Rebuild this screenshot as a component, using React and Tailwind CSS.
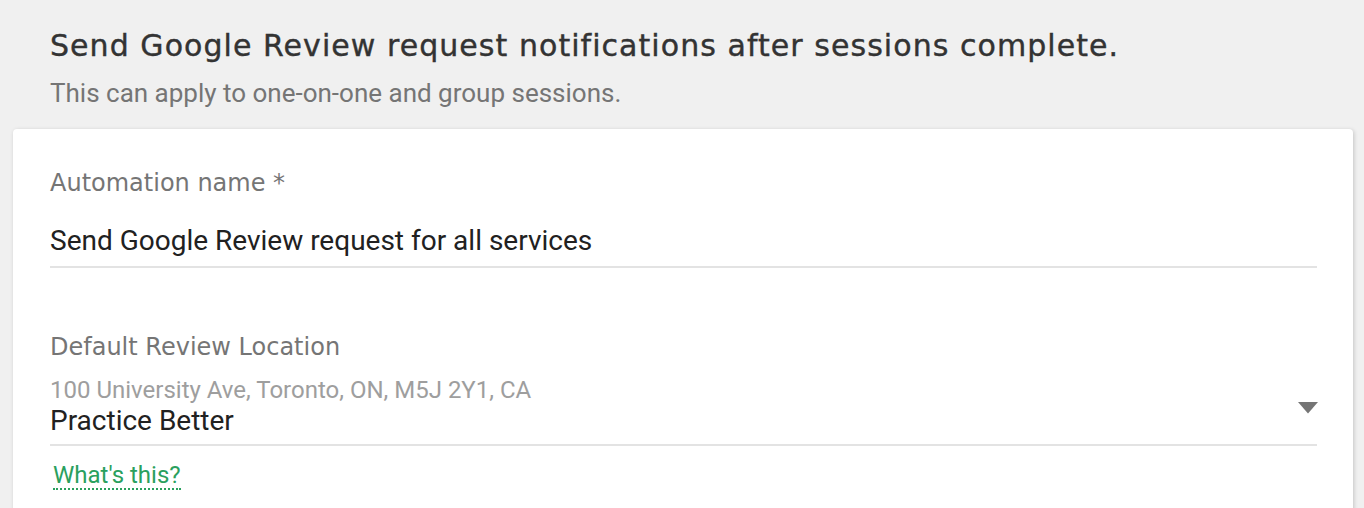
import React from "react";

export default function App() {
  return (
    <div className="w-[1364px] h-[508px] overflow-hidden bg-[#f0f0f0] font-['Roboto',sans-serif]">
      <div className="pl-[50px] pt-[26px]">
        <h1 className="font-['DejaVu_Sans',sans-serif] text-[30px] leading-[40px] tracking-[1.05px] text-[#333333] font-normal whitespace-nowrap [-webkit-text-stroke:0.4px_#333333]">
          Send Google Review request notifications after sessions complete.
        </h1>
        <p className="mt-[12px] text-[26px] leading-[30px] text-[#757575]">
          This can apply to one-on-one and group sessions.
        </p>
      </div>
      <div className="mt-[21px] ml-[13px] w-[1340px] h-[400px] bg-white rounded-[4px] shadow-[1px_1px_4px_rgba(0,0,0,0.18)] pl-[37px] pr-[36px] pt-[39px]">
        <div className="font-['DejaVu_Sans',sans-serif] text-[24px] leading-[30px] text-[#757575]">
          Automation name *
        </div>
        <div className="mt-[26px] h-[44px] border-b-2 border-[#e3e3e3] text-[28px] leading-[34px] text-[#212121]">
          Send Google Review request for all services
        </div>
        <div className="mt-[64px] font-['DejaVu_Sans',sans-serif] text-[24px] leading-[30px] text-[#757575]">
          Default Review Location
        </div>
        <div className="mt-[14px] relative border-b-2 border-[#e3e3e3] pb-[6px]">
          <div className="text-[24px] leading-[28px] text-[#9e9e9e]">
            100 University Ave, Toronto, ON, M5J 2Y1, CA
          </div>
          <div className="text-[28px] leading-[34px] text-[#212121]">Practice Better</div>
          <svg className="absolute -right-[1px] top-[26px]" width="20" height="12" viewBox="0 0 20 12">
            <path d="M0 0 L20 0 L10 11.5 Z" fill="#757575" />
          </svg>
        </div>
        <div className="mt-[16px] pl-[3px]">
          <span className="text-[24px] leading-[26px] text-[#2aa05e] border-b-2 border-dotted border-[#2aa05e] inline-block">
            What's this?
          </span>
        </div>
      </div>
    </div>
  );
}
